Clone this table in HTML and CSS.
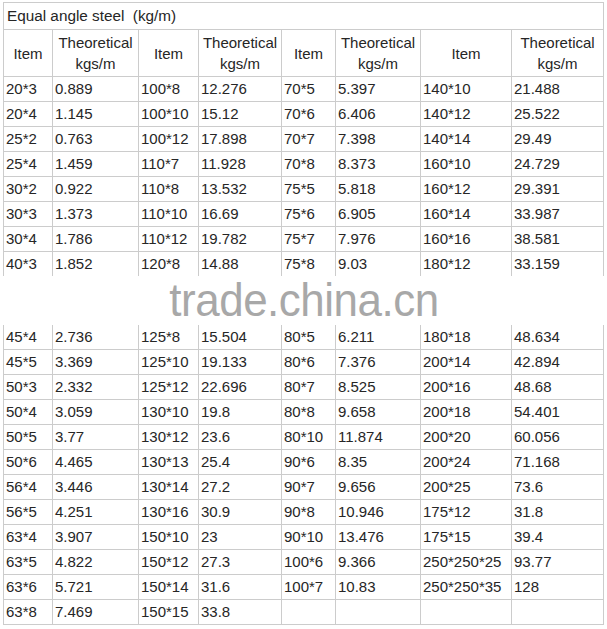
FILE: index.html
```html
<!DOCTYPE html>
<html>
<head>
<meta charset="utf-8">
<link rel="stylesheet" href="styles.css">
</head>
<body>
<table class="steel">
  <colgroup>
    <col class="c1"><col class="c2"><col class="c3"><col class="c4">
    <col class="c5"><col class="c6"><col class="c7"><col class="c8">
  </colgroup>
  <tr class="title-row"><td colspan="8" class="title">Equal angle steel&nbsp; (kg/m)</td></tr>
  <tr class="head-row">
    <td class="hd">Item</td><td class="hd">Theoretical<br>kgs/m</td>
    <td class="hd">Item</td><td class="hd">Theoretical<br>kgs/m</td>
    <td class="hd">Item</td><td class="hd">Theoretical<br>kgs/m</td>
    <td class="hd">Item</td><td class="hd">Theoretical<br>kgs/m</td>
  </tr>
  <tr><td>20*3</td><td>0.889</td><td>100*8</td><td>12.276</td><td>70*5</td><td>5.397</td><td>140*10</td><td>21.488</td></tr>
  <tr><td>20*4</td><td>1.145</td><td>100*10</td><td>15.12</td><td>70*6</td><td>6.406</td><td>140*12</td><td>25.522</td></tr>
  <tr><td>25*2</td><td>0.763</td><td>100*12</td><td>17.898</td><td>70*7</td><td>7.398</td><td>140*14</td><td>29.49</td></tr>
  <tr><td>25*4</td><td>1.459</td><td>110*7</td><td>11.928</td><td>70*8</td><td>8.373</td><td>160*10</td><td>24.729</td></tr>
  <tr><td>30*2</td><td>0.922</td><td>110*8</td><td>13.532</td><td>75*5</td><td>5.818</td><td>160*12</td><td>29.391</td></tr>
  <tr><td>30*3</td><td>1.373</td><td>110*10</td><td>16.69</td><td>75*6</td><td>6.905</td><td>160*14</td><td>33.987</td></tr>
  <tr><td>30*4</td><td>1.786</td><td>110*12</td><td>19.782</td><td>75*7</td><td>7.976</td><td>160*16</td><td>38.581</td></tr>
  <tr><td>40*3</td><td>1.852</td><td>120*8</td><td>14.88</td><td>75*8</td><td>9.03</td><td>180*12</td><td>33.159</td></tr>
  <tr class="gap-row"><td colspan="8" class="gap"><span class="mark">trade.china.cn</span></td></tr>
  <tr><td>45*4</td><td>2.736</td><td>125*8</td><td>15.504</td><td>80*5</td><td>6.211</td><td>180*18</td><td>48.634</td></tr>
  <tr><td>45*5</td><td>3.369</td><td>125*10</td><td>19.133</td><td>80*6</td><td>7.376</td><td>200*14</td><td>42.894</td></tr>
  <tr><td>50*3</td><td>2.332</td><td>125*12</td><td>22.696</td><td>80*7</td><td>8.525</td><td>200*16</td><td>48.68</td></tr>
  <tr><td>50*4</td><td>3.059</td><td>130*10</td><td>19.8</td><td>80*8</td><td>9.658</td><td>200*18</td><td>54.401</td></tr>
  <tr><td>50*5</td><td>3.77</td><td>130*12</td><td>23.6</td><td>80*10</td><td>11.874</td><td>200*20</td><td>60.056</td></tr>
  <tr><td>50*6</td><td>4.465</td><td>130*13</td><td>25.4</td><td>90*6</td><td>8.35</td><td>200*24</td><td>71.168</td></tr>
  <tr><td>56*4</td><td>3.446</td><td>130*14</td><td>27.2</td><td>90*7</td><td>9.656</td><td>200*25</td><td>73.6</td></tr>
  <tr><td>56*5</td><td>4.251</td><td>130*16</td><td>30.9</td><td>90*8</td><td>10.946</td><td>175*12</td><td>31.8</td></tr>
  <tr><td>63*4</td><td>3.907</td><td>150*10</td><td>23</td><td>90*10</td><td>13.476</td><td>175*15</td><td>39.4</td></tr>
  <tr><td>63*5</td><td>4.822</td><td>150*12</td><td>27.3</td><td>100*6</td><td>9.366</td><td>250*250*25</td><td>93.77</td></tr>
  <tr><td>63*6</td><td>5.721</td><td>150*14</td><td>31.6</td><td>100*7</td><td>10.83</td><td>250*250*35</td><td>128</td></tr>
  <tr><td>63*8</td><td>7.469</td><td>150*15</td><td>33.8</td><td></td><td></td><td></td><td></td></tr>
</table>
</body>
</html>
```
FILE: styles.css
```css
html, body {
  margin: 0;
  padding: 0;
  background: #ffffff;
}
body {
  padding: 2px 0 0 3px;
  font-family: "Liberation Sans", Arial, sans-serif;
  font-size: 15px;
  color: #262626;
}
.steel {
  border-collapse: collapse;
  table-layout: fixed;
  width: 600px;
}
.c1 { width: 49px; }
.c2 { width: 86px; }
.c3 { width: 60px; }
.c4 { width: 83px; }
.c5 { width: 54px; }
.c6 { width: 85px; }
.c7 { width: 91px; }
.c8 { width: 92px; }
.steel td {
  border: 1px solid #cccccc;
  padding: 0 2px;
  height: 24px;
  line-height: 18px;
  white-space: nowrap;
  vertical-align: middle;
  text-align: left;
}
.steel td.title {
  height: 26px;
  font-size: 15.3px;
  padding-left: 3px;
}
.steel td.hd {
  height: 46px;
  text-align: center;
  line-height: 21px;
  padding: 0;
}
.steel td.gap {
  border: hidden;
  height: 49px;
  text-align: center;
  padding: 0;
}
.mark {
  display: inline-block;
  font-size: 46px;
  line-height: 49px;
  color: #a8a8a8;
  letter-spacing: -0.5px;
  transform: scaleX(0.955);
}
```
